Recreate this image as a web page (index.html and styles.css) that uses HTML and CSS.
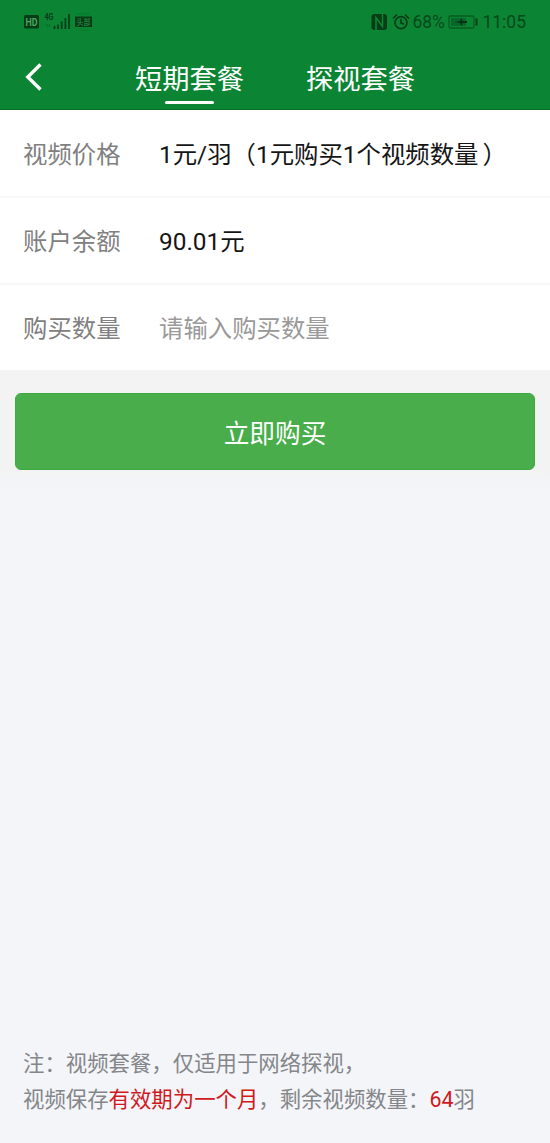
FILE: index.html
```html
<!DOCTYPE html>
<html lang="zh-CN">
<head>
<meta charset="utf-8">
<title>短期套餐</title>
<link rel="stylesheet" href="styles.css">
</head>
<body>
<div class="screen">
  <header class="header">
    <div class="status">
      <svg class="status-left" width="80" height="20" viewBox="0 0 80 20">
        <rect x="1" y="2" width="15" height="13.500" rx="1.500" fill="#063d17"/>
        <text class="hd" x="2.500" y="12.700" textLength="12" lengthAdjust="spacingAndGlyphs">HD</text>
        <text class="net" x="21.500" y="7.300" textLength="9" lengthAdjust="spacingAndGlyphs">4G</text>
        <path d="M31.500 16v-3M35 16v-4.500M38.700 16V8.500M42.400 16V5M46 16V1" stroke="#063d17" stroke-width="1.700"/>
        <path d="M24 11v3M26.500 11v3" stroke="#096a27" stroke-width="1"/>
        <path d="M54 .8h13M54 17.200h13" stroke="#097a2c" stroke-width="1"/>
        <rect x="52" y="3.500" width="17" height="10.500" fill="#063d17"/>
        <text class="tag" x="53.500" y="12" textLength="14" lengthAdjust="spacingAndGlyphs">头部</text>
      </svg>
      <div class="status-right">
        <svg width="16" height="18" viewBox="0 0 16 18">
          <rect x=".5" y="1" width="15.500" height="16" rx="3" fill="#063d17"/>
          <path d="M5 14.500V4.500l6.500 9V3.500" fill="none" stroke="#0b8433" stroke-width="1.500"/>
          <path d="M5 17v-3M11.500 1v3" stroke="#0b8433" stroke-width="1.500"/>
        </svg>
        <svg class="alarm" width="18" height="18" viewBox="0 0 18 18" fill="none" stroke="#063d17" stroke-width="1.700" stroke-linecap="round">
          <circle cx="9" cy="9.700" r="6"/><path d="M9 6.500V10l2.500 1M1.500 5l3-3M16.500 5l-3-3"/>
        </svg>
        <span class="percent">68%</span>
        <svg class="battery" width="31" height="16" viewBox="0 0 31 16">
          <rect x="1" y="2" width="25" height="12" rx="1.500" fill="none" stroke="#085c22" stroke-width="1.300"/>
          <rect x="3" y="4" width="15" height="8" fill="#08672a"/>
          <path d="M7 8l5-1 1.500-3 1 3H19v2h-4.500l-1 3L12 9z" fill="#053213"/>
          <path d="M28.500 4.500v7" stroke="#063d17" stroke-width="2"/>
        </svg>
        <span class="time">11:05</span>
      </div>
    </div>
    <nav class="nav">
      <svg class="back" width="18" height="28" viewBox="0 0 18 28" fill="none" stroke="#fff" stroke-width="3.400"><path d="M16.500 1.500L3.800 14l12.700 12.500"/></svg>
      <span class="tab active">短期套餐</span>
      <span class="tab">探视套餐</span>
    </nav>
  </header>
  <main>
    <div class="row price"><span class="label">视频价格</span><span class="value">1元/羽（1元购买1个视频数量<span class="close">）</span></span></div>
    <div class="row balance"><span class="label">账户余额</span><span class="value">90.01元</span></div>
    <div class="row quantity"><span class="label">购买数量</span><span class="value placeholder">请输入购买数量</span></div>
    <div class="action"><button class="buy">立即购买</button></div>
  </main>
  <footer class="note">
    <div>注：视频套餐，仅适用于网络探视，</div>
    <div>视频保存<b>有效期为一个月</b>，剩余视频数量：<b>64</b>羽</div>
  </footer>
</div>
</body>
</html>
```
FILE: styles.css
```css
* { box-sizing: border-box; }
body { margin: 0; font-family: Roboto, "Noto Sans CJK SC", sans-serif; font-weight: 400; }
.screen { width: 550px; height: 1143px; display: flex; flex-direction: column; background: #f3f5f9; overflow: hidden; }
.header { height: 110px; background: #0b8433; border-bottom: 1px solid #08702a; }
.status { height: 44px; padding: 0 24px 0 23px; display: flex; justify-content: space-between; align-items: center; }
.hd { font: bold 10.5px Roboto, sans-serif; fill: #4fa45f; }
.net { font: bold 8.5px Roboto, sans-serif; fill: #063d17; }
.tag { font: 8px "Noto Sans CJK SC", sans-serif; fill: #2f9448; }
.status-left { margin-top: 1px; }
.status-right { display: flex; align-items: center; color: #06491b; font-size: 17.5px; line-height: 44px; }
.alarm { margin: 0 2px 0 5px; }
.percent { width: 32px; white-space: nowrap; }
.battery { margin: 0 3px 0 4px; }
.nav { height: 66px; display: flex; padding: 0 0 5px 24px; color: #fff; }
.back { margin: 19px 93px 0 0; }
.tab { width: 109px; margin-right: 62px; display: flex; flex-direction: column; align-items: center; font-size: 27.3px; line-height: 40px; padding-top: 16px; white-space: nowrap; }
.tab.active::after { content: ""; flex: none; width: 49px; height: 3px; margin-top: 1px; border-radius: 2px; background: #fff; }
.row { display: flex; align-items: center; padding-left: 23px; background: #fff; border-bottom: 2px solid #f8f8f8; font-size: 24.4px; line-height: 36px; }
.price { height: 88px; padding-top: 3px; }
.balance { height: 87px; padding-top: 2px; }
.quantity { height: 85px; padding-top: 2px; border-bottom: 0; }
.label { width: 136px; color: #808080; }
.value { color: #151515; white-space: nowrap; }
.close { margin-left: 4px; }
.placeholder { color: #999; }
.action { padding: 23px 15px 20px; background: linear-gradient(#f3f3f3 85%, #f3f5f9); }
.buy { display: block; width: 100%; height: 77px; padding: 0; border: 1px solid #3fa943; border-radius: 6px; background: #49ad4b; color: #fff; font: 25.7px/36px "Noto Sans CJK SC", sans-serif; }
.note { margin-top: auto; padding: 0 0 25px 23px; color: #858689; font-size: 21.4px; line-height: 36px; white-space: nowrap; }
.note b { font-weight: 400; color: #d01820; }
```
